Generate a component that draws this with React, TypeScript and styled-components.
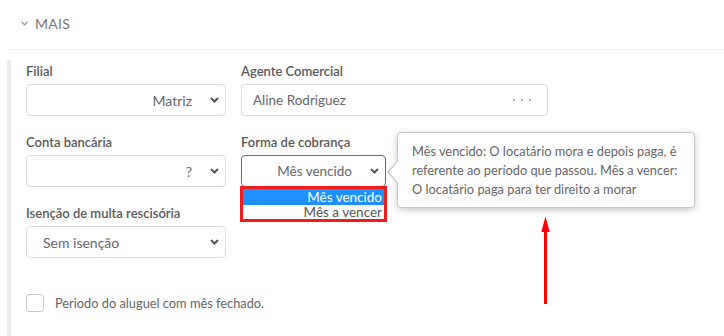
import React from "react";
import styled, { createGlobalStyle } from "styled-components";

const GlobalStyle = createGlobalStyle`
  html, body { margin: 0; padding: 0; background: #fff; }
  body { font-family: Lato, "Open Sans", Arial, sans-serif; color: #555; }
  * { box-sizing: border-box; }
`;

const Page = styled.div`
  position: relative;
  width: 724px;
  height: 336px;
  overflow: hidden;
  background: #fff;
`;

const Header = styled.div`
  display: flex;
  align-items: center;
  gap: 7px;
  height: 49px;
  padding: 0 0 3px 21px;
  color: #777;
  font-size: 14px;
  letter-spacing: 0.3px;
`;

const Divider = styled.div`
  margin-left: 8px;
  border-top: 1px solid #eeeeee;
`;

const Section = styled.div`
  margin: 10px 0 0 7px;
  border-left: 4px solid #ebebeb;
  padding: 2px 0 0 15px;
  height: 276px;
`;

const FormGrid = styled.div`
  display: grid;
  grid-template-columns: 200px 307px;
  column-gap: 15px;
  row-gap: 17px;
  align-items: start;
`;

const Field = styled.div`
  display: flex;
  flex-direction: column;
  gap: 4px;
`;

const Label = styled.div`
  font-size: 13px;
  line-height: 18px;
  font-weight: 600;
  color: #595959;
`;

const Anchor = styled.div`
  position: relative;
`;

const SelectBox = styled.div<{ $align?: "start" | "end"; $width?: number; $focused?: boolean; $size?: number }>`
  display: flex;
  align-items: center;
  justify-content: ${(p) => (p.$align === "start" ? "space-between" : "flex-end")};
  gap: 18px;
  width: ${(p) => (p.$width ? `${p.$width}px` : "100%")};
  height: 32px;
  padding: 0 6px 0 16px;
  border: 1px solid ${(p) => (p.$focused ? "#6b5c99" : "#dcdcdc")};
  border-radius: 4px;
  background: #fff;
  font-size: ${(p) => p.$size ?? 14}px;
  color: #666;
`;

const LookupBox = styled.div`
  display: flex;
  align-items: center;
  justify-content: space-between;
  height: 32px;
  padding: 0 16px 0 11px;
  border: 1px solid #dcdcdc;
  border-radius: 4px;
  font-size: 13.5px;
  color: #666;
`;

const Dots = styled.div`
  display: flex;
  gap: 6px;
  span {
    width: 2px;
    height: 2px;
    border-radius: 50%;
    background: #999;
  }
`;

const DropdownList = styled.div`
  position: absolute;
  top: 31px;
  left: -1px;
  width: 147px;
  border: 3px solid #ee1c1c;
  background: #fff;
  font-size: 13.5px;
  line-height: 16px;
  z-index: 2;
`;

const Option = styled.div<{ $active?: boolean }>`
  text-align: right;
  padding: 0 2px 0 0;
  height: ${(p) => (p.$active ? "16px" : "14px")};
  line-height: ${(p) => (p.$active ? "16px" : "14px")};
  color: ${(p) => (p.$active ? "#fff" : "#555")};
  background: ${(p) => (p.$active ? "#1e90ff" : "#fff")};
`;

const Tooltip = styled.div`
  position: absolute;
  left: 156px;
  top: -23px;
  width: 298px;
  height: 76px;
  padding: 9px 10px 0 14px;
  background: #fff;
  border: 1px solid #c9c9c9;
  border-radius: 4px;
  box-shadow: 0 2px 7px rgba(0, 0, 0, 0.22);
  font-size: 12.8px;
  line-height: 19px;
  color: #666;
  z-index: 3;

  &::before,
  &::after {
    content: "";
    position: absolute;
    width: 0;
    height: 0;
    border-top: 12px solid transparent;
    border-bottom: 12px solid transparent;
  }
  &::before {
    left: -11px;
    top: 27px;
    border-right: 11px solid #c2c2c2;
  }
  &::after {
    left: -9px;
    top: 27px;
    border-right: 10px solid #fff;
  }
`;

const CheckRow = styled.label`
  display: flex;
  align-items: center;
  gap: 11px;
  margin-top: 36px;
  font-size: 12.8px;
  color: #666;
`;

const CheckBox = styled.span`
  width: 18px;
  height: 18px;
  border: 1px solid #c8c8c8;
  border-radius: 3px;
  background: #fff;
`;

const Annotation = styled.svg`
  position: absolute;
  left: 539px;
  top: 215px;
`;

const Chevron = () => (
  <svg width="9" height="6" viewBox="0 0 9 6">
    <path d="M1 1 L4.5 4.5 L8 1" fill="none" stroke="#555" strokeWidth="2" />
  </svg>
);

const SmallChevron = () => (
  <svg width="7" height="5" viewBox="0 0 7 5">
    <path d="M0.7 0.8 L3.5 3.8 L6.3 0.8" fill="none" stroke="#888" strokeWidth="1.2" />
  </svg>
);

export default function App() {
  return (
    <Page>
      <GlobalStyle />
      <Header>
        <SmallChevron />
        <span>MAIS</span>
      </Header>
      <Divider />
      <Section>
        <FormGrid>
          <Field>
            <Label>Filial</Label>
            <SelectBox $align="end">
              <span>Matriz</span>
              <Chevron />
            </SelectBox>
          </Field>
          <Field>
            <Label>Agente Comercial</Label>
            <LookupBox>
              <span>Aline Rodriguez</span>
              <Dots>
                <span />
                <span />
                <span />
              </Dots>
            </LookupBox>
          </Field>
          <Field>
            <Label>Conta bancária</Label>
            <SelectBox $align="end">
              <span>?</span>
              <Chevron />
            </SelectBox>
          </Field>
          <Field>
            <Label>Forma de cobrança</Label>
            <Anchor>
              <SelectBox $align="end" $width={145} $size={13.5} $focused>
                <span>Mês vencido</span>
                <Chevron />
              </SelectBox>
              <DropdownList>
                <Option $active>Mês vencido</Option>
                <Option>Mês a vencer</Option>
              </DropdownList>
              <Tooltip>
                Mês vencido: O locatário mora e depois paga, é referente ao período que passou. Mês a
                vencer: O locatário paga para ter direito a morar
              </Tooltip>
            </Anchor>
          </Field>
          <Field>
            <Label>Isenção de multa rescisória</Label>
            <SelectBox $align="start">
              <span>Sem isenção</span>
              <Chevron />
            </SelectBox>
          </Field>
        </FormGrid>
        <CheckRow>
          <CheckBox />
          <span>Periodo do aluguel com mês fechado.</span>
        </CheckRow>
      </Section>
      <Annotation width="14" height="92" viewBox="0 0 14 92">
        <line x1="6.5" y1="14" x2="6.5" y2="89" stroke="#f00" strokeWidth="3" />
        <polygon points="2.3,17 6.5,1.5 10.7,17" fill="#f00" />
      </Annotation>
    </Page>
  );
}
